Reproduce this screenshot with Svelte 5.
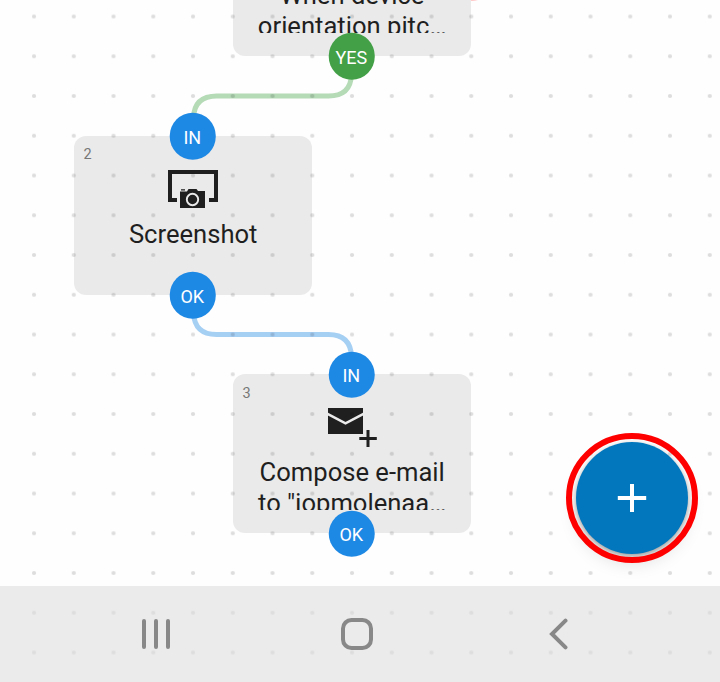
<script>
  const nodes = [
    { x: 233, y: -103, lines: ['When device', 'orientation pitc…'], out: 'YES', icon: '', number: '1' },
    { x: 74, y: 136, lines: ['Screenshot'], input: 'IN', out: 'OK', icon: 'shot', number: '2' },
    { x: 233, y: 374.4, lines: ['Compose e-mail', 'to "jopmolenaa…'], input: 'IN', out: 'OK', icon: 'mail', number: '3' }
  ];
</script>

<main class="screen">
  <svg class="wires" viewBox="0 0 720 682">
    <path class="yes" d="M351.500 72v3q-1 21-23 21H217q-23 0-23.500 22v8" />
    <path class="ok" d="M193.500 310v3q1 21.500 23 21.500h112q22 0 23 22v8" />
    <circle class="hint" cx="472" cy="-17" r="18" />
  </svg>

  {#each nodes as node}
    <article class="node" style="left: {node.x}px; top: {node.y}px">
      <span class="number">{node.number}</span>
      <div class="icon">
        {#if node.icon === 'shot'}
          <svg width="54" height="44" viewBox="166 168 54 44">
            <path d="M168 170h50v32h-9v-4h5v-24h-42v24h5v4h-9z" />
            <path d="M180 191.500h7l1.500-2.500h8l1.500 2H205v17h-25zM181 189.200h4v1.300h-4z" />
            <circle cx="192.500" cy="199.500" r="5.700" fill="#1f1f1f" stroke="#eaeaea" stroke-width="1.900" />
          </svg>
        {:else if node.icon === 'mail'}
          <svg width="54" height="44" viewBox="325 406 54 44">
            <path d="M328 408h35v26h-35z" />
            <path d="M327.500 413.800L345.500 423.300L363.500 413.800" fill="none" stroke="#eaeaea" stroke-width="2.500" />
            <path d="M366.500 430h3v7h7.300v3h-7.300v7h-3v-7h-7.200v-3h7.200z" />
          </svg>
        {/if}
      </div>
      <div class="label">
        {#each node.lines as line}
          <div>{line}</div>
        {/each}
      </div>
    </article>
  {/each}

  <svg class="dots" width="720" height="682">
    <defs>
      <pattern id="grid" x="14.150" y="-3.350" width="39.750" height="39.750" patternUnits="userSpaceOnUse">
        <circle cx="19.880" cy="19.880" r="2.100" fill="#000" fill-opacity=".13" />
      </pattern>
    </defs>
    <rect x="14.150" width="706" height="682" fill="url(#grid)" />
  </svg>

  {#each nodes as node}
    {#if node.input}
      <span class="port" style="left: {node.x + 119}px; top: {node.y}px">{node.input}</span>
    {/if}
    <span class="port" class:green={node.out === 'YES'} style="left: {node.x + 119}px; top: {node.y + 159}px">{node.out}</span>
  {/each}

  <button class="add" aria-label="Add">
    <svg width="132" height="130" viewBox="566 433 132 130">
      <ellipse cx="632" cy="498" rx="63" ry="62" fill="none" stroke="#f00" stroke-width="6" />
      <path d="M617.800 498h28.400M632 484v28" stroke="#fff" stroke-width="4" />
    </svg>
  </button>

  <nav class="system">
    <svg width="30" height="32" viewBox="0 0 30 32"><path d="M3 3v26M15 3v26M27 3v26" /></svg>
    <svg class="home" width="34" height="34" viewBox="0 0 34 34"><rect x="3" y="3" width="28" height="28" rx="8.500" /></svg>
    <svg width="22" height="32" viewBox="0 0 22 32"><path d="M17.500 2.700L4 16l13.500 13.300" /></svg>
  </nav>
</main>

<style>
  :global(body) { margin: 0; }
  .screen {
    position: relative;
    width: 720px;
    height: 682px;
    overflow: hidden;
    background: #fefefe;
    font-family: Roboto, sans-serif;
  }
  .wires, .dots { position: absolute; inset: 0; }
  .wires path { fill: none; stroke-width: 5; }
  .yes { stroke: #b4dab6; }
  .ok { stroke: #a6cff4; }
  .hint { fill: #ffc9c9; }
  .node {
    position: absolute;
    box-sizing: border-box;
    width: 238.400px;
    height: 159px;
    padding-top: 32px;
    border-radius: 12px;
    background: #eaeaea;
    color: #1f1f1f;
  }
  .number {
    position: absolute;
    left: 9.500px;
    top: 10.200px;
    font-size: 14.500px;
    line-height: 18px;
    color: #777;
  }
  .icon { display: flex; justify-content: center; height: 50px; }
  .icon svg { fill: #1f1f1f; }
  .label {
    box-sizing: border-box;
    height: 54px;
    padding-top: 1px;
    overflow: hidden;
    text-align: center;
    font-size: 25.600px;
    line-height: 31px;
    white-space: nowrap;
  }
  .port {
    position: absolute;
    display: grid;
    place-items: center;
    box-sizing: border-box;
    width: 46.500px;
    height: 46.500px;
    margin: .3px 0 0 -.2px;
    padding: 2px 1px 0 0;
    border-radius: 50%;
    transform: translate(-50%, -50%);
    background: #1e88e5;
    color: #fff;
    font-size: 18px;
    line-height: 22px;
  }
  .green { background: #43a047; }
  .add {
    position: absolute;
    left: 576px;
    top: 442px;
    display: grid;
    place-items: center;
    width: 112px;
    height: 112px;
    padding: 0;
    border: 0;
    border-radius: 50%;
    background: #0277bd;
    box-shadow: 0 2px 5px rgba(0, 0, 0, .3), 0 9px 18px rgba(0, 0, 0, .13);
  }
  .add svg { flex: none; margin: -9px -10px; }
  .system {
    position: absolute;
    left: 0;
    right: 0;
    bottom: 0;
    display: flex;
    align-items: center;
    justify-content: space-between;
    box-sizing: border-box;
    height: 96px;
    padding: 0 150px 0 141px;
    background: rgba(222, 222, 222, .6);
  }
  .system svg { fill: none; stroke: #888; stroke-width: 4; stroke-linecap: round; }
  .system .home { margin: 0 3px 0 -3px; }
</style>
